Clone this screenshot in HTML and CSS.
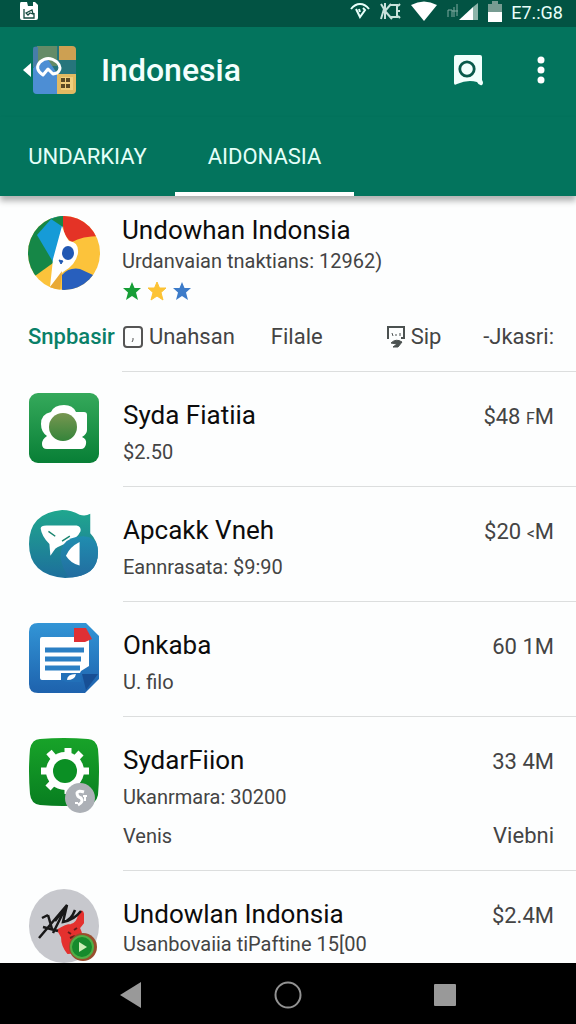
FILE: index.html
```
<!DOCTYPE html>
<html lang="id">
<head>
  <meta charset="UTF-8" />
  <meta name="viewport" content="width=device-width, initial-scale=1.0" />
  <title>Indonesia</title>
  <link rel="stylesheet" href="styles.css">
</head>
<body>
  <div class="statusbar">
    <svg class="status-save" width="20" height="20" viewBox="0 0 20 20">
      <path d="M2 1h14l3 3v13q0 2-2 2H3q-2 0-2-2V3q0-2 1-2z" fill="#fff"/>
      <path d="M8 1h6v4H9z" fill="#075445"/>
      <path d="M5 8v9h10v-5M7 12l6-3 1 4-3-1-2 2z" fill="none" stroke="#164b40" stroke-width="1.3"/>
    </svg>
    <div class="status-icons">
      <svg width="20" height="20" viewBox="0 0 20 20" fill="none" stroke="#e8fffa" stroke-width="2">
        <path d="M1 8q4-5 9-5t9 5M6 8l4 8 5-7-2-2M9 8l1 3"/>
      </svg>
      <svg width="22" height="20" viewBox="0 0 22 20" fill="none" stroke="#c9e3dc" stroke-width="2">
        <path d="M2 3l3 5-3 10M6 2v16M6 10l6-7M6 10l7 8M11 4h7v12h-6M21 3l-2 2M18 10h3M19 15l2 2"/>
      </svg>
      <svg width="28" height="20" viewBox="0 0 28 20"><path d="M1 4Q14-3 27 4L14 20z" fill="#fff"/></svg>
      <svg width="32" height="20" viewBox="0 0 32 20">
        <path d="M1 16V9h4v7M7 6v10M10 3v12M5 10h6" fill="none" stroke="#7eaaa0"/>
        <path d="M12 19L26 6v13z" fill="#fff"/>
        <path d="M26 6l5-4v17h-5z" fill="#8eb5aa"/>
      </svg>
      <svg width="14" height="21" viewBox="0 0 14 21">
        <path d="M4 0h6v3h4v8H0V3h4z" fill="#779c92"/><path d="M0 11h14v10H0z" fill="#fff"/>
      </svg>
      <span class="clock">E7.:G8</span>
    </div>
  </div>

  <header class="appbar">
    <button class="back" aria-label="Kembali">
      <svg width="54" height="52" viewBox="0 0 54 52">
        <path d="M8 19v14L0 26z" fill="#fff"/>
        <rect x="10" y="2" width="43" height="48" rx="4" fill="#26757c"/>
        <path d="M14 2h20v20H14z" fill="#648b67"/>
        <path d="M11 3h4v20h-5V6q0-3 1-3z" fill="#477da8"/>
        <path d="M10 24l14-10 11 17v19H14q-4 0-4-4z" fill="#4d8ed4"/>
        <path d="M36 2h13q4 0 4 4v10H36z" fill="#cda052"/>
        <path d="M34 30h19v16q0 4-4 4H34z" fill="#e2ba62"/>
        <path d="M38 33h12v13H38z" fill="#f1cf7c"/>
        <path d="M38 34h4v4h-4zM43 34h4v4h-4zM38 40h4v4h-4zM43 40h4v4h-4z" fill="#5d4b24"/>
        <path d="M20 31q-9-6-3-13 8-7 17 0 6 6 0 11l-4 1-5-5-5 6z" fill="none" stroke="#fff" stroke-width="3" stroke-linejoin="round"/>
      </svg>
    </button>
    <h1>Indonesia</h1>
    <button class="search" aria-label="Cari">
      <svg width="30" height="32" viewBox="0 0 30 32">
        <path d="M3 1h24q2 0 2 2v23q2 3 0 5-3 1-5-3-9-3-20 2-3 2-3-1V3q0-2 2-2z" fill="#f1fffc"/>
        <circle cx="14" cy="15" r="7.200" fill="none" stroke="#08594a" stroke-width="2.800"/>
      </svg>
    </button>
    <button class="more" aria-label="Menu">
      <svg width="8" height="28" viewBox="0 0 8 28" fill="#fff">
        <circle cx="4" cy="4" r="3.500"/><circle cx="4" cy="14" r="3.500"/><circle cx="4" cy="24" r="3.500"/>
      </svg>
    </button>
  </header>
  <nav class="tabs">
    <button class="tab">UNDARKIAY</button>
    <button class="tab active">AIDONASIA</button>
  </nav>

  <main>
    <section class="intro">
      <svg class="icon" width="72" height="76" viewBox="0 0 72 76">
        <defs><clipPath id="disc"><ellipse cx="36" cy="38" rx="36" ry="37"/></clipPath></defs>
        <g clip-path="url(#disc)">
          <rect width="72" height="76" fill="#fcc33b"/>
          <path d="M0 0h36L25 48 0 66z" fill="#168747"/>
          <path d="M9 20L24 3l12-3-2 18-9 29z" fill="#169bd7"/>
          <path d="M23 4l12-4v12z" fill="#168747"/>
          <path d="M35 0h37v21q-18 0-28 6-8-4-9-16z" fill="#e43326"/>
          <path d="M34 76V60q7-8 18-6l13 6v16z" fill="#285fbd"/>
          <path d="M34 11q3 10 7 15 10 1 9 12-2 12-15 19L22 72l3-28z" fill="#fff"/>
          <path d="M22 72l12-16-2 20h-9z" fill="#e9a935"/>
          <ellipse cx="40" cy="38" rx="6" ry="7" fill="#2158b3"/>
          <path d="M31 45l4 1-2 3z" fill="#2158b3" stroke="#2158b3"/>
        </g>
      </svg>
      <div class="intro-text">
        <h2>Undowhan Indonsia</h2>
        <p>Urdanvaian tnaktians: 12962)</p>
        <div class="stars">
          <svg width="20" height="20" viewBox="0 0 20 20"><path d="M10 1l2.500 6H19l-5 4.500L16 19l-6-4-6 4 2-7.500L1 7h6.500z" fill="#169e36"/></svg>
          <svg width="20" height="20" viewBox="0 0 20 20"><path d="M10 1l2.500 6H19l-5 4.500L16 19l-6-4-6 4 2-7.500L1 7h6.500z" fill="#fcc335" stroke="#fcc335"/></svg>
          <svg width="20" height="20" viewBox="0 0 20 20"><path d="M10 1l2.500 6H19l-5 4.500L16 19l-6-4-6 4 2-7.500L1 7h6.500z" fill="#3c7bc9"/></svg>
        </div>
      </div>
    </section>

    <div class="filters">
      <button class="filter selected">Snpbasir</button>
      <button class="filter">
        <svg width="20" height="22" viewBox="0 0 20 22" fill="none" stroke="#555">
          <rect x="1" y="1" width="18" height="20" rx="3" stroke-width="2"/><path d="M10 12v2l-1 2" stroke-width="1"/>
        </svg>
        Unahsan
      </button>
      <button class="filter">Filale</button>
      <button class="filter">
        <svg width="18" height="24" viewBox="0 0 18 24" fill="none" stroke="#4b5150" stroke-width="2">
          <path d="M1 14V2h16v11h-3"/><path d="M5 8l1 3M9 9v2M13 8v3" stroke-width="1"/><path d="M4 18q5-5 11-1l-4 5H6l4-3z" fill="#4b5150" stroke-width="1"/>
        </svg>
        Sip
      </button>
      <button class="filter">-Jkasri:</button>
    </div>

    <div class="list">
      <article class="row">
        <svg class="icon" width="70" height="70" viewBox="0 0 70 70">
          <defs><linearGradient id="green" x2="0" y2="1"><stop stop-color="#35a95b"/><stop offset="1" stop-color="#087f36"/></linearGradient>
          <linearGradient id="olive" x2="0" y2="1"><stop stop-color="#779650"/><stop offset="1" stop-color="#35843a"/></linearGradient></defs>
          <rect width="70" height="70" rx="9" fill="url(#green)"/>
          <path d="M22 19q3-7 13-7 9 0 12 7h8q3 0 3 3v15q0 4-5 7 5 2 4 7-1 5-5 5H18q-5 0-5-5t5-8q-6-4-6-12 0-10 10-12z" fill="#fff"/>
          <circle cx="34" cy="34" r="14" fill="url(#olive)"/>
        </svg>
        <div class="row-body">
          <div class="line"><h2>Syda Fiatiia</h2><span class="price">$48 <small>F</small>M</span></div>
          <p>$2.50</p>
        </div>
      </article>

      <article class="row">
        <svg class="icon" width="72" height="72" viewBox="0 0 72 72">
          <defs><linearGradient id="teal" x2="0" y2="1"><stop stop-color="#20a78e"/><stop offset="1" stop-color="#1d6f9c"/></linearGradient>
          <linearGradient id="blue" x2="0" y2="1"><stop stop-color="#208daf"/><stop offset="1" stop-color="#226da0"/></linearGradient></defs>
          <path d="M0 36Q0 4 34 1q10 0 18 5 6 2 11-1v20q8 8 8 20 0 25-34 26Q0 68 0 36z" fill="url(#teal)"/>
          <path d="M12 20q0-3 6-3h31q5 1 4 6-3 7-14 12-8 3-12 6l-5 7-1-12Q13 28 12 20z" fill="#fff"/>
          <path d="M36 36q6-8 20-8 15 1 15 16 0 26-30 26-14-20-5-34z" fill="url(#blue)"/>
          <path d="M52 34v24q-9-2-14-10 4-9 14-14z" fill="#fff"/>
          <path d="M20 23l7 5M34 33l8-5" stroke="#19846f" stroke-width="1.500"/>
        </svg>
        <div class="row-body">
          <div class="line"><h2>Apcakk Vneh</h2><span class="price">$20 <small>&lt;</small>M</span></div>
          <p>Eannrasata: $9:90</p>
        </div>
      </article>

      <article class="row">
        <svg class="icon" width="70" height="70" viewBox="0 0 70 70">
          <defs><linearGradient id="doc" x2="0" y2="1"><stop stop-color="#3295d6"/><stop offset="1" stop-color="#1e62ad"/></linearGradient></defs>
          <path d="M9 0h48l13 13v43L56 70H9q-9 0-9-9V9q0-9 9-9z" fill="url(#doc)"/>
          <path d="M13 14h45q2 0 2 2v27l-8 5-2 4H38q0 4-4 5H13q-2 0-2-2V16q0-2 2-2z" fill="#fff"/>
          <path d="M16 27h39M16 36h36M16 45h35" stroke="#2b7fc4" stroke-width="5"/>
          <path d="M32 50h20v9H37l-5-2z" fill="#2270b8"/>
          <path d="M38 57q0-6 9-6-1 6-9 6z" fill="#fff"/>
          <path d="M45 5h12l6 11-7 3H45z" fill="#df3034"/>
          <path d="M53 51h16L57 67z" fill="#174f95"/>
        </svg>
        <div class="row-body">
          <div class="line"><h2>Onkaba</h2><span class="price">60 1M</span></div>
          <p>U. filo</p>
        </div>
      </article>

      <article class="row">
        <svg class="icon" width="70" height="76" viewBox="0 0 70 76">
          <defs><linearGradient id="gear" x2="0" y2="1"><stop stop-color="#18a329"/><stop offset="1" stop-color="#087e20"/></linearGradient></defs>
          <path d="M11 1q24-2 48 0 8 0 10 10 2 23 0 46-2 10-12 10-23 2-46 0Q2 66 1 56-1 33 1 11 3 1 11 1z" fill="url(#gear)"/>
          <g stroke="#fff" stroke-width="7"><path d="M39 10v46M12 33h48M20 14l32 38M52 15L19 50"/></g>
          <circle cx="36" cy="33" r="19" fill="#fff"/>
          <circle cx="36" cy="33" r="12" fill="#0b8f24"/>
          <circle cx="51" cy="60" r="15" fill="#acb0b6"/>
          <path d="M55 54q-6-2-7 1 0 4 4 5 3 4-3 7" fill="none" stroke="#fff" stroke-width="3"/>
          <path d="M56 57v6M46 65h3M54 58h4" stroke="#fff" stroke-width="2"/>
        </svg>
        <div class="row-body">
          <div class="line"><h2>SydarFiion</h2><span class="price">33 4M</span></div>
          <p>Ukanrmara: 30200</p>
          <div class="line extra"><p>Venis</p><span class="price">Viebni</span></div>
        </div>
      </article>

      <article class="row last">
        <svg class="icon" width="70" height="76" viewBox="0 0 70 76">
          <ellipse cx="35" cy="37" rx="35" ry="37" fill="#c7c8cd"/>
          <path d="M29 41q8-5 13-5 7-2 8-11 3-5 4 0v9l-4 5q4 8 1 14l-3 10-9 1q-6-7-6-16z" fill="#e4312e" stroke="#e4312e" stroke-linejoin="round" stroke-width="2"/>
          <path d="M10 49L38 16 24 44M13 29l6-3M19 26l4 14M14 38l15 4M26 32L38 16l-4 17q8-1 12-12M34 33q11-2 18-11" fill="none" stroke="#181818" stroke-width="2.500"/>
          <path d="M39 43l3 2M45 41l3-2M41 49l5-2" stroke="#641b1a" stroke-width="2"/>
          <circle cx="54" cy="58" r="14" fill="#994e2d"/>
          <circle cx="53" cy="58" r="11" fill="#168a2c" stroke="#52ad46" stroke-width="2"/>
          <path d="M50 53l8 5-8 5z" fill="#cceeb8"/>
        </svg>
        <div class="row-body">
          <div class="line"><h2>Undowlan Indonsia</h2><span class="price">$2.4M</span></div>
          <p>Usanbovaiia tiPaftine 15[00</p>
        </div>
      </article>
    </div>
  </main>

  <footer class="navbar">
    <button aria-label="Kembali"><svg width="24" height="28" viewBox="0 0 24 28"><path d="M22 1v26L1 14z" fill="#999"/></svg></button>
    <button aria-label="Beranda"><svg width="28" height="28" viewBox="0 0 28 28"><circle cx="14" cy="14" r="12.500" fill="none" stroke="#929292" stroke-width="2"/></svg></button>
    <button aria-label="Terbaru"><svg width="24" height="28" viewBox="0 0 24 28"><rect x="1" y="3" width="22" height="22" rx="1" fill="#999"/></svg></button>
  </footer>
</body>
</html>
```
FILE: styles.css
```
* {
  box-sizing: border-box;
}

body {
  margin: 0;
  height: 100vh;
  display: flex;
  flex-direction: column;
  font-family: Roboto, sans-serif;
  background-color: #fdfefe;
  color: #0c0c0c;
}

h1, h2, p {
  margin: 0;
  font-weight: 400;
  white-space: nowrap;
}

button {
  padding: 0;
  border: none;
  background: none;
  font-family: inherit;
  color: inherit;
  cursor: pointer;
}

svg {
  display: block;
  flex-shrink: 0;
}

.statusbar {
  flex: none;
  display: flex;
  justify-content: space-between;
  height: 27px;
  padding: 1px 13px 0 19px;
  background-color: #025343;
  color: #e8fffa;
}

.status-icons {
  display: flex;
  gap: 9px;
}

.clock {
  font-size: 18px;
  line-height: 24px;
}

.appbar {
  flex: none;
  display: flex;
  align-items: center;
  height: 90px;
  padding: 0 31px 4px 23px;
  background-color: #03745d;
  color: #f4fffd;
}

.appbar h1 {
  flex: 1;
  margin-left: 24px;
  font-size: 32px;
  line-height: 40px;
  font-weight: 500;
}

.more {
  margin-left: 54px;
}

.tabs {
  flex: none;
  display: flex;
  height: 79px;
  background-color: #03745d;
  box-shadow: 0 5px 6px rgba(0, 0, 0, 0.3);
  color: #e4fff9;
}

.tab {
  width: 175px;
  padding-top: 4px;
  border-bottom: 4px solid transparent;
  font-size: 22px;
}

.tab.active {
  width: 179px;
  border-bottom-color: #fff;
}

main {
  flex: 1;
  min-height: 0;
  overflow: hidden;
}

.intro {
  display: flex;
  gap: 22px;
  padding: 19px 22px 0 28px;
}

h2 {
  font-size: 26px;
  line-height: 32px;
}

p {
  font-size: 20px;
  line-height: 28px;
  color: #444;
}

.intro h2 {
  line-height: 30px;
}

.intro p {
  line-height: 32px;
}

.stars {
  display: flex;
  gap: 5px;
  padding-top: 4px;
}

.filters {
  display: flex;
  align-items: center;
  height: 56px;
  margin-top: 8px;
  margin-bottom: 6px;
  padding: 0 22px 0 28px;
}

.filter {
  display: flex;
  align-items: center;
  gap: 6px;
  font-size: 22px;
  line-height: 28px;
  color: #444;
}

.selected {
  margin-right: 8px;
  color: #098068;
  font-weight: 500;
}

.filter:nth-child(2) {
  margin-right: 36px;
}

.filter:nth-child(3) {
  margin-right: 64px;
}

.filter:last-child {
  margin-left: auto;
}

.list {
  margin-left: 122px;
  border-top: 1px solid #dcdede;
}

.row {
  display: flex;
  gap: 24px;
  margin-left: -93px;
}

.row .icon {
  width: 70px;
  margin-top: 21px;
}

.row-body {
  flex: 1;
  padding: 27px 22px 20px 0;
  border-bottom: 1px solid #dcdede;
}

.line {
  display: flex;
  justify-content: space-between;
  align-items: baseline;
}

.row-body > p {
  margin-top: 7px;
}

.extra {
  margin-top: 11px;
}

.price {
  font-size: 22px;
  line-height: 28px;
  color: #444;
}

.price small {
  font-size: 16px;
  line-height: 16px;
}

.last .icon {
  margin-top: 18px;
}

.last .row-body > p {
  margin-top: 0;
}

.navbar {
  flex: none;
  display: flex;
  justify-content: center;
  align-items: center;
  gap: 131px;
  height: 61px;
  padding-bottom: 4px;
  padding-top: 6px;
  background-color: #000;
}
```
